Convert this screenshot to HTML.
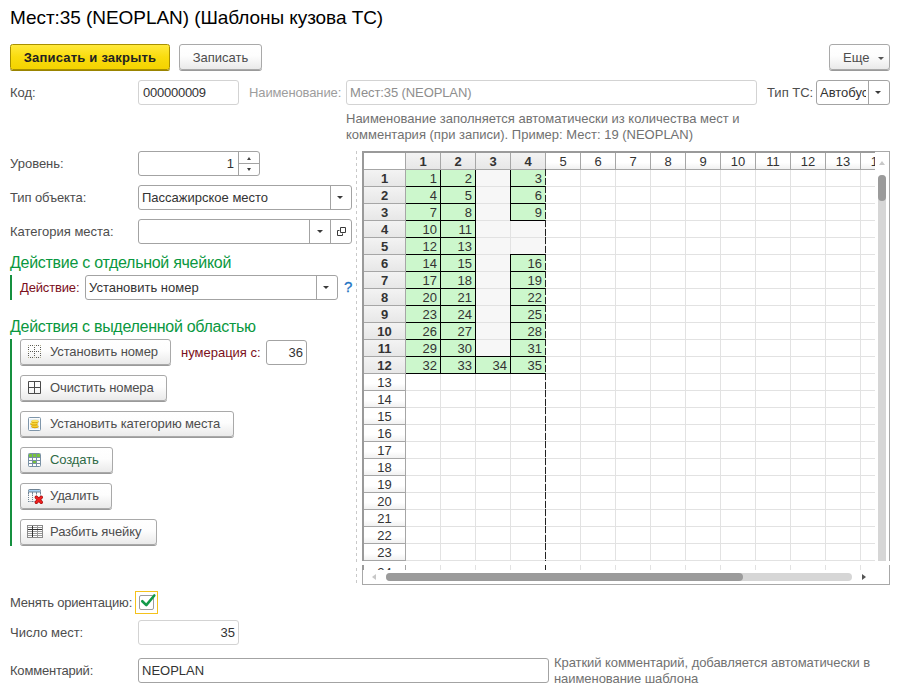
<!DOCTYPE html>
<html><head><meta charset="utf-8">
<style>
*{box-sizing:border-box;margin:0;padding:0}
html,body{width:904px;height:699px;overflow:hidden;background:#fff}
body{font-family:"Liberation Sans",sans-serif;font-size:13px;color:#4d4d4d;position:relative}
.a{position:absolute;white-space:nowrap}
.title{left:10px;top:7px;font-size:19px;color:#000;letter-spacing:-0.06px}
.btn{position:absolute;border:1px solid #a9a9a9;border-radius:3px;background:linear-gradient(#ffffff,#fdfdfd 45%,#eaeaea);box-shadow:0 1px 0 #9a9a9a;color:#4d4d4d;font-size:13px;white-space:nowrap;line-height:24px}
.ybtn{background:linear-gradient(#ffe93c,#f9dc0e 50%,#f4d300);border-color:#a89000;border-radius:2.5px;box-shadow:0 1px 0 #9a8400;font-weight:bold;color:#222;letter-spacing:0.2px}
.inp{position:absolute;border:1px solid #a3a3a3;border-radius:3px;background:#fff;font-size:13px;color:#333;white-space:nowrap;overflow:hidden}
.lt{border-color:#d3d3d3}
.lbl{position:absolute;color:#4d4d4d;font-size:13px;white-space:nowrap}
.head{position:absolute;color:#0a9840;font-size:16px;letter-spacing:-0.28px;white-space:nowrap}
.red{color:#7b1020}
.gbar{position:absolute;width:2px;background:#15903f}
.sep{position:absolute;top:0;bottom:0;width:1px;background:#a3a3a3}
.arr{position:absolute;width:0;height:0;border-left:3px solid transparent;border-right:3px solid transparent;border-top:3px solid #3a3a3a}
.ico{position:absolute;left:7px;top:5px}
.bt{position:absolute;left:29px;top:0;letter-spacing:-0.11px}
.gc{position:absolute;width:36px;height:18px;background:#ccf7cc;border:1px solid #000;text-align:right;padding-right:3px;padding-top:1px;line-height:16px;font-size:13px;color:#333}
.hc{position:absolute;background:linear-gradient(#f3f3f3,#e7e7e7);border-right:1px solid #a6a6a6;border-bottom:1px solid #a6a6a6;text-align:center;line-height:18px;font-size:13px;color:#333}
.corner{background:#fff}
.rh{position:absolute;background:linear-gradient(#f3f3f3,#e7e7e7);border-right:1px solid #a6a6a6;border-bottom:1px solid #a6a6a6;text-align:center;line-height:18px;font-size:13px;color:#333}
.b{font-weight:bold}
.w{background:linear-gradient(#fff 60%,#f1f1f1)}
</style></head><body>
<div class="a title">Мест:35 (NEOPLAN) (Шаблоны кузова ТС)</div>

<div class="btn ybtn" style="left:10px;top:44px;width:160px;height:26px;text-align:center;padding-top:1px">Записать и закрыть</div>
<div class="btn" style="left:179px;top:44px;width:83px;height:26px;text-align:center;padding-top:1px">Записать</div>
<div class="btn" style="left:829px;top:44px;width:61px;height:26px;padding-left:13px;padding-top:1px">Еще<div class="arr" style="left:48px;top:12px;border-top-color:#555"></div></div>

<div class="lbl" style="left:10px;top:85px">Код:</div>
<div class="inp lt" style="left:138px;top:80px;width:101px;height:25px;line-height:23px;padding-left:4px;letter-spacing:-0.25px">000000009</div>
<div class="lbl" style="left:249px;top:85px;color:#9d9d9d;letter-spacing:-0.12px">Наименование:</div>
<div class="inp lt" style="left:346px;top:80px;width:411px;height:25px;line-height:23px;padding-left:3px;color:#8e8e8e;letter-spacing:-0.1px">Мест:35 (NEOPLAN)</div>
<div class="lbl" style="left:767px;top:85px">Тип ТС:</div>
<div class="inp" style="left:816px;top:80px;width:74px;height:25px;line-height:23px"><span style="position:absolute;left:3px;top:0;width:46px;overflow:hidden">Автобус</span><div class="sep" style="left:51px"></div><div class="arr" style="left:58px;top:10px"></div></div>

<div class="lbl" style="left:346px;top:111px;color:#717171;line-height:16px">Наименование заполняется автоматически из количества мест и<br>комментария (при записи). Пример: Мест: 19 (NEOPLAN)</div>

<div class="lbl" style="left:10px;top:156px">Уровень:</div>
<div class="inp" style="left:138px;top:151px;width:122px;height:25px;line-height:23px"><span style="position:absolute;right:25px;top:0">1</span><div class="sep" style="left:99px"></div><div style="position:absolute;left:99px;top:11px;width:22px;height:1px;background:#a3a3a3"></div><div class="arr" style="left:108px;top:5px;border-top:none;border-bottom:3px solid #444;border-left-width:2.5px;border-right-width:2.5px"></div><div class="arr" style="left:108px;top:16px;border-left-width:2.5px;border-right-width:2.5px"></div></div>

<div class="lbl" style="left:10px;top:190px;letter-spacing:-0.1px">Тип объекта:</div>
<div class="inp" style="left:138px;top:185px;width:214px;height:25px;line-height:23px"><span style="position:absolute;left:3px;top:0">Пассажирское место</span><div class="sep" style="left:191px"></div><div class="arr" style="left:198px;top:10px"></div></div>

<div class="lbl" style="left:10px;top:224px">Категория места:</div>
<div class="inp" style="left:138px;top:219px;width:214px;height:25px"><div class="sep" style="left:170px"></div><div class="arr" style="left:178px;top:10px"></div><div class="sep" style="left:191px"></div>
<svg style="position:absolute;left:197px;top:6px" width="11" height="11" viewBox="0 0 11 11"><path d="M4.5 1.5h5v5h-5z" fill="none" stroke="#3a3a3a" stroke-width="1"/><path d="M3.5 4.5h-2v5h5v-2" fill="none" stroke="#3a3a3a" stroke-width="1"/></svg></div>

<div class="head" style="left:10px;top:254px">Действие с отдельной ячейкой</div>
<div class="gbar" style="left:10px;top:275px;height:25px"></div>
<div class="lbl red" style="left:20px;top:280px;letter-spacing:-0.15px">Действие:</div>
<div class="inp" style="left:85px;top:275px;width:253px;height:25px;line-height:23px"><span style="position:absolute;left:3px;top:0">Установить номер</span><div class="sep" style="left:230px"></div><div class="arr" style="left:237px;top:10px"></div></div>
<div class="a" style="left:344px;top:278px;font-size:15px;-webkit-text-stroke:0.3px #1f74c4;color:#1f74c4">?</div>

<div class="head" style="left:10px;top:318px">Действия с выделенной областью</div>
<div class="gbar" style="left:10px;top:339px;height:207px"></div>

<div class="btn" style="left:20px;top:339px;width:151px;height:26px">
<svg class="ico" width="13" height="13" viewBox="0 0 13 13"><path fill="#5a5a55" d="M0 2h1v1h-1zM0 4h1v1h-1zM0 8h1v1h-1zM0 10h1v1h-1zM2 0h1v1h-1zM2 6h1v1h-1zM2 12h1v1h-1zM4 0h1v1h-1zM4 6h1v1h-1zM4 12h1v1h-1zM6 2h1v1h-1zM6 4h1v1h-1zM6 6h1v1h-1zM6 8h1v1h-1zM6 10h1v1h-1zM8 0h1v1h-1zM8 6h1v1h-1zM8 12h1v1h-1zM10 0h1v1h-1zM10 6h1v1h-1zM10 12h1v1h-1zM12 2h1v1h-1zM12 4h1v1h-1zM12 8h1v1h-1zM12 10h1v1h-1z"/><path fill="#b8b697" d="M0 0h1v1h-1zM0 6h1v1h-1zM0 12h1v1h-1zM6 0h1v1h-1zM6 12h1v1h-1zM12 0h1v1h-1zM12 6h1v1h-1zM12 12h1v1h-1z"/></svg>
<span class="bt">Установить номер</span></div>
<div class="lbl red" style="left:181px;top:345px">нумерация с:</div>
<div class="inp" style="left:266px;top:340px;width:41px;height:25px;line-height:23px"><span style="position:absolute;right:3px;top:0">36</span></div>

<div class="btn" style="left:20px;top:375px;width:147px;height:26px">
<svg class="ico" width="13" height="13" viewBox="0 0 13 13"><path d="M0.5 0.5h12v12h-12zM6.5 0.5v12M0.5 6.5h12" fill="none" stroke="#4a4a4a" stroke-width="1"/></svg>
<span class="bt">Очистить номера</span></div>

<div class="btn" style="left:20px;top:411px;width:214px;height:26px">
<svg class="ico" width="13" height="14" viewBox="0 0 13 14"><rect x="0.5" y="0.5" width="12" height="13" rx="1" fill="#fbfdff" stroke="#7f96aa"/><rect x="2" y="2" width="9" height="10" fill="#e4eef8"/><ellipse cx="6.9" cy="9.6" rx="3.7" ry="1.7" fill="#d99e00"/><ellipse cx="6.9" cy="9.1" rx="3.4" ry="1.2" fill="#f2cc30"/><ellipse cx="6" cy="6.9" rx="3.7" ry="1.5" fill="#d9a000"/><ellipse cx="6" cy="6.4" rx="3.4" ry="1.1" fill="#f5d640"/><ellipse cx="7" cy="4.5" rx="3.7" ry="1.6" fill="#dca800"/><ellipse cx="7" cy="4" rx="3.4" ry="1.2" fill="#f8e060"/></svg>
<span class="bt">Установить категорию места</span></div>

<div class="btn" style="left:20px;top:447px;width:93px;height:26px">
<svg class="ico" width="13" height="14" viewBox="0 0 13 14"><rect x="0.5" y="0.5" width="12" height="13" rx="0.8" fill="#fff" stroke="#7890a4"/><rect x="1" y="1" width="11" height="3" fill="#78c43c"/><path d="M0.5 4.5h12M0.5 7.5h12M0.5 10.5h12M4.5 0.5v13M8.5 0.5v13" stroke="#7890a4" stroke-width="1"/><rect x="5" y="8" width="3" height="2" fill="#78c43c"/></svg>
<span class="bt" style="color:#2e6a45">Создать</span></div>

<div class="btn" style="left:20px;top:483px;width:92px;height:26px">
<svg class="ico" width="16" height="16" viewBox="0 0 16 16"><rect x="0.5" y="0.5" width="12" height="2.5" rx="1" fill="#a8d4f8" stroke="#6f8394"/><path d="M0.5 3v2.5M4.5 3v2.5M8.5 3v2.5M12.5 3v2.5" stroke="#6f8394" stroke-width="1"/><path d="M0.5 6v7M4.5 6v7M0.5 12.5h7" stroke="#6f8394" stroke-width="1" stroke-dasharray="1 1"/><path d="M8.5 5.5v2M12.5 5.5v2" stroke="#b8c4ce" stroke-width="1"/><path d="M8.3 8.3l5 5M13.3 8.3l-5 5" stroke="#a01010" stroke-width="3.4" stroke-linecap="round"/><path d="M8.3 8.3l5 5M13.3 8.3l-5 5" stroke="#f02020" stroke-width="2.2" stroke-linecap="round"/></svg>
<span class="bt">Удалить</span></div>

<div class="btn" style="left:20px;top:519px;width:137px;height:26px">
<svg class="ico" style="left:6px" width="16" height="13" viewBox="0 0 16 13"><rect x="0.5" y="0.5" width="15" height="12" fill="#fff" stroke="#8a8a8a"/><path d="M1 2.5h14M1 6.5h14M1 8.5h14M1 10.5h14M10.5 1v11" stroke="#9a9a9a" stroke-width="1"/><path d="M5.5 1v11M1 4.5h14" stroke="#333" stroke-width="1"/></svg>
<span class="bt">Разбить ячейку</span></div>

<!-- left dashed separator -->
<div style="position:absolute;left:356px;top:151px;width:1px;height:414px;background:repeating-linear-gradient(#c9c9c9 0 3px,transparent 3px 6px)"></div><div style="position:absolute;left:356px;top:568px;width:1px;height:15px;background:repeating-linear-gradient(#c9c9c9 0 3px,transparent 3px 6px)"></div>

<!-- grid frame -->
<div style="position:absolute;left:362px;top:151px;width:2px;height:410px;background:#9a9a9a"></div><div style="position:absolute;left:362px;top:565px;width:2px;height:5px;background:#9a9a9a"></div><div style="position:absolute;left:362px;top:570px;width:1px;height:15px;background:#a8a8a8"></div>
<div style="position:absolute;left:362px;top:151px;width:513px;height:2px;background:#9a9a9a"></div>
<div style="position:absolute;left:875px;top:151px;width:15px;height:1px;background:#a8a8a8"></div>
<div style="position:absolute;left:889px;top:151px;width:1px;height:410px;background:#a8a8a8"></div>
<div style="position:absolute;left:889px;top:565px;width:1px;height:20px;background:#a8a8a8"></div>
<div style="position:absolute;left:362px;top:584px;width:528px;height:1px;background:#a8a8a8"></div>
<div style="position:absolute;left:364px;top:153px;width:511px;height:408px;overflow:hidden">
<div style="position:absolute;left:41px;top:16px;width:140px;height:204px;background:#f7f7f7"></div>
<div style="position:absolute;left:76px;top:0;width:1px;height:408px;background:#e2e2e2"></div>
<div style="position:absolute;left:111px;top:0;width:1px;height:408px;background:#e2e2e2"></div>
<div style="position:absolute;left:146px;top:0;width:1px;height:408px;background:#e2e2e2"></div>
<div style="position:absolute;left:181px;top:0;width:1px;height:408px;background:#e2e2e2"></div>
<div style="position:absolute;left:216px;top:0;width:1px;height:408px;background:#e2e2e2"></div>
<div style="position:absolute;left:251px;top:0;width:1px;height:408px;background:#e2e2e2"></div>
<div style="position:absolute;left:286px;top:0;width:1px;height:408px;background:#e2e2e2"></div>
<div style="position:absolute;left:321px;top:0;width:1px;height:408px;background:#e2e2e2"></div>
<div style="position:absolute;left:356px;top:0;width:1px;height:408px;background:#e2e2e2"></div>
<div style="position:absolute;left:391px;top:0;width:1px;height:408px;background:#e2e2e2"></div>
<div style="position:absolute;left:426px;top:0;width:1px;height:408px;background:#e2e2e2"></div>
<div style="position:absolute;left:461px;top:0;width:1px;height:408px;background:#e2e2e2"></div>
<div style="position:absolute;left:496px;top:0;width:1px;height:408px;background:#e2e2e2"></div>
<div style="position:absolute;left:41px;top:33px;width:470px;height:1px;background:#e2e2e2"></div>
<div style="position:absolute;left:41px;top:50px;width:470px;height:1px;background:#e2e2e2"></div>
<div style="position:absolute;left:41px;top:67px;width:470px;height:1px;background:#e2e2e2"></div>
<div style="position:absolute;left:41px;top:84px;width:470px;height:1px;background:#e2e2e2"></div>
<div style="position:absolute;left:41px;top:101px;width:470px;height:1px;background:#e2e2e2"></div>
<div style="position:absolute;left:41px;top:118px;width:470px;height:1px;background:#e2e2e2"></div>
<div style="position:absolute;left:41px;top:135px;width:470px;height:1px;background:#e2e2e2"></div>
<div style="position:absolute;left:41px;top:152px;width:470px;height:1px;background:#e2e2e2"></div>
<div style="position:absolute;left:41px;top:169px;width:470px;height:1px;background:#e2e2e2"></div>
<div style="position:absolute;left:41px;top:186px;width:470px;height:1px;background:#e2e2e2"></div>
<div style="position:absolute;left:41px;top:203px;width:470px;height:1px;background:#e2e2e2"></div>
<div style="position:absolute;left:41px;top:220px;width:470px;height:1px;background:#e2e2e2"></div>
<div style="position:absolute;left:41px;top:237px;width:470px;height:1px;background:#e2e2e2"></div>
<div style="position:absolute;left:41px;top:254px;width:470px;height:1px;background:#e2e2e2"></div>
<div style="position:absolute;left:41px;top:271px;width:470px;height:1px;background:#e2e2e2"></div>
<div style="position:absolute;left:41px;top:288px;width:470px;height:1px;background:#e2e2e2"></div>
<div style="position:absolute;left:41px;top:305px;width:470px;height:1px;background:#e2e2e2"></div>
<div style="position:absolute;left:41px;top:322px;width:470px;height:1px;background:#e2e2e2"></div>
<div style="position:absolute;left:41px;top:339px;width:470px;height:1px;background:#e2e2e2"></div>
<div style="position:absolute;left:41px;top:356px;width:470px;height:1px;background:#e2e2e2"></div>
<div style="position:absolute;left:41px;top:373px;width:470px;height:1px;background:#e2e2e2"></div>
<div style="position:absolute;left:41px;top:390px;width:470px;height:1px;background:#e2e2e2"></div>
<div style="position:absolute;left:41px;top:407px;width:470px;height:1px;background:#e2e2e2"></div>
<div class="gc" style="left:41px;top:16px">1</div>
<div class="gc" style="left:76px;top:16px">2</div>
<div class="gc" style="left:146px;top:16px;border-right-color:transparent">3</div>
<div class="gc" style="left:41px;top:33px">4</div>
<div class="gc" style="left:76px;top:33px">5</div>
<div class="gc" style="left:146px;top:33px;border-right-color:transparent">6</div>
<div class="gc" style="left:41px;top:50px">7</div>
<div class="gc" style="left:76px;top:50px">8</div>
<div class="gc" style="left:146px;top:50px;border-right-color:transparent">9</div>
<div class="gc" style="left:41px;top:67px">10</div>
<div class="gc" style="left:76px;top:67px">11</div>
<div class="gc" style="left:41px;top:84px">12</div>
<div class="gc" style="left:76px;top:84px">13</div>
<div class="gc" style="left:41px;top:101px">14</div>
<div class="gc" style="left:76px;top:101px">15</div>
<div class="gc" style="left:146px;top:101px;border-right-color:transparent">16</div>
<div class="gc" style="left:41px;top:118px">17</div>
<div class="gc" style="left:76px;top:118px">18</div>
<div class="gc" style="left:146px;top:118px;border-right-color:transparent">19</div>
<div class="gc" style="left:41px;top:135px">20</div>
<div class="gc" style="left:76px;top:135px">21</div>
<div class="gc" style="left:146px;top:135px;border-right-color:transparent">22</div>
<div class="gc" style="left:41px;top:152px">23</div>
<div class="gc" style="left:76px;top:152px">24</div>
<div class="gc" style="left:146px;top:152px;border-right-color:transparent">25</div>
<div class="gc" style="left:41px;top:169px">26</div>
<div class="gc" style="left:76px;top:169px">27</div>
<div class="gc" style="left:146px;top:169px;border-right-color:transparent">28</div>
<div class="gc" style="left:41px;top:186px">29</div>
<div class="gc" style="left:76px;top:186px">30</div>
<div class="gc" style="left:146px;top:186px;border-right-color:transparent">31</div>
<div class="gc" style="left:41px;top:203px">32</div>
<div class="gc" style="left:76px;top:203px">33</div>
<div class="gc" style="left:111px;top:203px">34</div>
<div class="gc" style="left:146px;top:203px;border-right-color:transparent">35</div>
<div class="hc corner" style="left:0;top:0;width:42px;height:17px"></div>
<div class="hc b" style="left:42px;top:0;width:35px;height:17px">1</div>
<div class="hc b" style="left:77px;top:0;width:35px;height:17px">2</div>
<div class="hc b" style="left:112px;top:0;width:35px;height:17px">3</div>
<div class="hc b" style="left:147px;top:0;width:35px;height:17px">4</div>
<div class="hc w" style="left:182px;top:0;width:35px;height:17px">5</div>
<div class="hc w" style="left:217px;top:0;width:35px;height:17px">6</div>
<div class="hc w" style="left:252px;top:0;width:35px;height:17px">7</div>
<div class="hc w" style="left:287px;top:0;width:35px;height:17px">8</div>
<div class="hc w" style="left:322px;top:0;width:35px;height:17px">9</div>
<div class="hc w" style="left:357px;top:0;width:35px;height:17px">10</div>
<div class="hc w" style="left:392px;top:0;width:35px;height:17px">11</div>
<div class="hc w" style="left:427px;top:0;width:35px;height:17px">12</div>
<div class="hc w" style="left:462px;top:0;width:35px;height:17px">13</div>
<div class="hc w" style="left:497px;top:0;width:35px;height:17px">14</div>
<div class="rh b" style="left:0;top:17px;width:42px;height:17px">1</div>
<div class="rh b" style="left:0;top:34px;width:42px;height:17px">2</div>
<div class="rh b" style="left:0;top:51px;width:42px;height:17px">3</div>
<div class="rh b" style="left:0;top:68px;width:42px;height:17px">4</div>
<div class="rh b" style="left:0;top:85px;width:42px;height:17px">5</div>
<div class="rh b" style="left:0;top:102px;width:42px;height:17px">6</div>
<div class="rh b" style="left:0;top:119px;width:42px;height:17px">7</div>
<div class="rh b" style="left:0;top:136px;width:42px;height:17px">8</div>
<div class="rh b" style="left:0;top:153px;width:42px;height:17px">9</div>
<div class="rh b" style="left:0;top:170px;width:42px;height:17px">10</div>
<div class="rh b" style="left:0;top:187px;width:42px;height:17px">11</div>
<div class="rh b" style="left:0;top:204px;width:42px;height:17px">12</div>
<div class="rh w" style="left:0;top:221px;width:42px;height:17px">13</div>
<div class="rh w" style="left:0;top:238px;width:42px;height:17px">14</div>
<div class="rh w" style="left:0;top:255px;width:42px;height:17px">15</div>
<div class="rh w" style="left:0;top:272px;width:42px;height:17px">16</div>
<div class="rh w" style="left:0;top:289px;width:42px;height:17px">17</div>
<div class="rh w" style="left:0;top:306px;width:42px;height:17px">18</div>
<div class="rh w" style="left:0;top:323px;width:42px;height:17px">19</div>
<div class="rh w" style="left:0;top:340px;width:42px;height:17px">20</div>
<div class="rh w" style="left:0;top:357px;width:42px;height:17px">21</div>
<div class="rh w" style="left:0;top:374px;width:42px;height:17px">22</div>
<div class="rh w" style="left:0;top:391px;width:42px;height:17px">23</div>
<div class="rh w" style="left:0;top:408px;width:42px;height:17px">24</div>
<div style="position:absolute;left:181px;top:16px;width:1px;height:7px;background:#222"></div>
<div style="position:absolute;left:181px;top:25px;width:1px;height:7px;background:#222"></div>
<div style="position:absolute;left:181px;top:33px;width:1px;height:7px;background:#222"></div>
<div style="position:absolute;left:181px;top:42px;width:1px;height:7px;background:#222"></div>
<div style="position:absolute;left:181px;top:50px;width:1px;height:7px;background:#222"></div>
<div style="position:absolute;left:181px;top:59px;width:1px;height:7px;background:#222"></div>
<div style="position:absolute;left:181px;top:67px;width:1px;height:7px;background:#222"></div>
<div style="position:absolute;left:181px;top:76px;width:1px;height:7px;background:#222"></div>
<div style="position:absolute;left:181px;top:84px;width:1px;height:7px;background:#222"></div>
<div style="position:absolute;left:181px;top:93px;width:1px;height:7px;background:#222"></div>
<div style="position:absolute;left:181px;top:101px;width:1px;height:7px;background:#222"></div>
<div style="position:absolute;left:181px;top:110px;width:1px;height:7px;background:#222"></div>
<div style="position:absolute;left:181px;top:118px;width:1px;height:7px;background:#222"></div>
<div style="position:absolute;left:181px;top:127px;width:1px;height:7px;background:#222"></div>
<div style="position:absolute;left:181px;top:135px;width:1px;height:7px;background:#222"></div>
<div style="position:absolute;left:181px;top:144px;width:1px;height:7px;background:#222"></div>
<div style="position:absolute;left:181px;top:152px;width:1px;height:7px;background:#222"></div>
<div style="position:absolute;left:181px;top:161px;width:1px;height:7px;background:#222"></div>
<div style="position:absolute;left:181px;top:169px;width:1px;height:7px;background:#222"></div>
<div style="position:absolute;left:181px;top:178px;width:1px;height:7px;background:#222"></div>
<div style="position:absolute;left:181px;top:186px;width:1px;height:7px;background:#222"></div>
<div style="position:absolute;left:181px;top:195px;width:1px;height:7px;background:#222"></div>
<div style="position:absolute;left:181px;top:203px;width:1px;height:7px;background:#222"></div>
<div style="position:absolute;left:181px;top:212px;width:1px;height:7px;background:#222"></div>
<div style="position:absolute;left:181px;top:220px;width:1px;height:7px;background:#222"></div>
<div style="position:absolute;left:181px;top:229px;width:1px;height:7px;background:#222"></div>
<div style="position:absolute;left:181px;top:237px;width:1px;height:7px;background:#222"></div>
<div style="position:absolute;left:181px;top:246px;width:1px;height:7px;background:#222"></div>
<div style="position:absolute;left:181px;top:254px;width:1px;height:7px;background:#222"></div>
<div style="position:absolute;left:181px;top:263px;width:1px;height:7px;background:#222"></div>
<div style="position:absolute;left:181px;top:271px;width:1px;height:7px;background:#222"></div>
<div style="position:absolute;left:181px;top:280px;width:1px;height:7px;background:#222"></div>
<div style="position:absolute;left:181px;top:288px;width:1px;height:7px;background:#222"></div>
<div style="position:absolute;left:181px;top:297px;width:1px;height:7px;background:#222"></div>
<div style="position:absolute;left:181px;top:305px;width:1px;height:7px;background:#222"></div>
<div style="position:absolute;left:181px;top:314px;width:1px;height:7px;background:#222"></div>
<div style="position:absolute;left:181px;top:322px;width:1px;height:7px;background:#222"></div>
<div style="position:absolute;left:181px;top:331px;width:1px;height:7px;background:#222"></div>
<div style="position:absolute;left:181px;top:339px;width:1px;height:7px;background:#222"></div>
<div style="position:absolute;left:181px;top:348px;width:1px;height:7px;background:#222"></div>
<div style="position:absolute;left:181px;top:356px;width:1px;height:7px;background:#222"></div>
<div style="position:absolute;left:181px;top:365px;width:1px;height:7px;background:#222"></div>
<div style="position:absolute;left:181px;top:373px;width:1px;height:7px;background:#222"></div>
<div style="position:absolute;left:181px;top:382px;width:1px;height:7px;background:#222"></div>
<div style="position:absolute;left:181px;top:390px;width:1px;height:7px;background:#222"></div>
<div style="position:absolute;left:181px;top:399px;width:1px;height:7px;background:#222"></div>
<div style="position:absolute;left:181px;top:407px;width:1px;height:1px;background:#222"></div>
</div>
<div style="position:absolute;left:364px;top:565px;width:511px;height:5px;overflow:hidden">
<div style="position:absolute;left:76px;top:0;width:1px;height:5px;background:#e2e2e2"></div>
<div style="position:absolute;left:111px;top:0;width:1px;height:5px;background:#e2e2e2"></div>
<div style="position:absolute;left:146px;top:0;width:1px;height:5px;background:#e2e2e2"></div>
<div style="position:absolute;left:181px;top:0;width:1px;height:5px;background:#e2e2e2"></div>
<div style="position:absolute;left:216px;top:0;width:1px;height:5px;background:#e2e2e2"></div>
<div style="position:absolute;left:251px;top:0;width:1px;height:5px;background:#e2e2e2"></div>
<div style="position:absolute;left:286px;top:0;width:1px;height:5px;background:#e2e2e2"></div>
<div style="position:absolute;left:321px;top:0;width:1px;height:5px;background:#e2e2e2"></div>
<div style="position:absolute;left:356px;top:0;width:1px;height:5px;background:#e2e2e2"></div>
<div style="position:absolute;left:391px;top:0;width:1px;height:5px;background:#e2e2e2"></div>
<div style="position:absolute;left:426px;top:0;width:1px;height:5px;background:#e2e2e2"></div>
<div style="position:absolute;left:461px;top:0;width:1px;height:5px;background:#e2e2e2"></div>
<div style="position:absolute;left:496px;top:0;width:1px;height:5px;background:#e2e2e2"></div>
<div style="position:absolute;left:41px;top:0;width:1px;height:5px;background:#a0a0a0"></div>
<div style="position:absolute;left:181px;top:0;width:1px;height:5px;background:#222"></div>
<div class="rh w" style="left:0;top:-1px;width:42px;height:17px">24</div>
</div>
<!-- v scrollbar -->
<div style="position:absolute;left:879px;top:161px;width:0;height:0;border-left:3.5px solid transparent;border-right:3.5px solid transparent;border-bottom:4px solid #c8c8c8"></div>
<div style="position:absolute;left:878px;top:175px;width:8px;height:386px;background:#d6d6d6;border-radius:4px 4px 0 0"></div>
<div style="position:absolute;left:878px;top:175px;width:8px;height:26px;background:#9b9b9b;border-radius:4px"></div>
<!-- h scrollbar -->
<div style="position:absolute;left:371px;top:573px;width:0;height:0;border-top:3.5px solid transparent;border-bottom:3.5px solid transparent;border-right:4px solid #c8c8c8;margin-top:1px;margin-left:1px"></div>
<div style="position:absolute;left:386px;top:573px;width:466px;height:8px;background:#d6d6d6;border-radius:4px"></div>
<div style="position:absolute;left:386px;top:573px;width:357px;height:8px;background:#9b9b9b;border-radius:4px"></div>
<div style="position:absolute;left:862px;top:574px;width:0;height:0;border-top:3.5px solid transparent;border-bottom:3.5px solid transparent;border-left:4px solid #555"></div>

<div class="lbl" style="left:10px;top:595px;letter-spacing:-0.22px">Менять ориентацию:</div>
<div style="position:absolute;left:135px;top:591px;width:23px;height:23px;border:1px solid #f5c21b"></div>
<div style="position:absolute;left:139px;top:595px;width:15px;height:15px;border:1px solid #9d9d9d;border-radius:2px;background:#fff"></div>
<svg style="position:absolute;left:138px;top:591px" width="20" height="20" viewBox="0 0 20 20"><path d="M4.3 10.2l4 3.9l8-9.6" fill="none" stroke="#139a4a" stroke-width="2.6" stroke-linecap="round" stroke-linejoin="round"/></svg>

<div class="lbl" style="left:10px;top:625px">Число мест:</div>
<div class="inp lt" style="left:138px;top:620px;width:101px;height:25px;line-height:23px"><span style="position:absolute;right:3px;top:0">35</span></div>
<div class="lbl" style="left:10px;top:663px;letter-spacing:-0.2px">Комментарий:</div>
<div class="inp" style="left:138px;top:658px;width:411px;height:25px;line-height:23px;padding-left:3px">NEOPLAN</div>
<div class="lbl" style="left:554px;top:655px;color:#717171;line-height:16px;letter-spacing:-0.06px">Краткий комментарий, добавляется автоматически в<br>наименование шаблона</div>
</body></html>
